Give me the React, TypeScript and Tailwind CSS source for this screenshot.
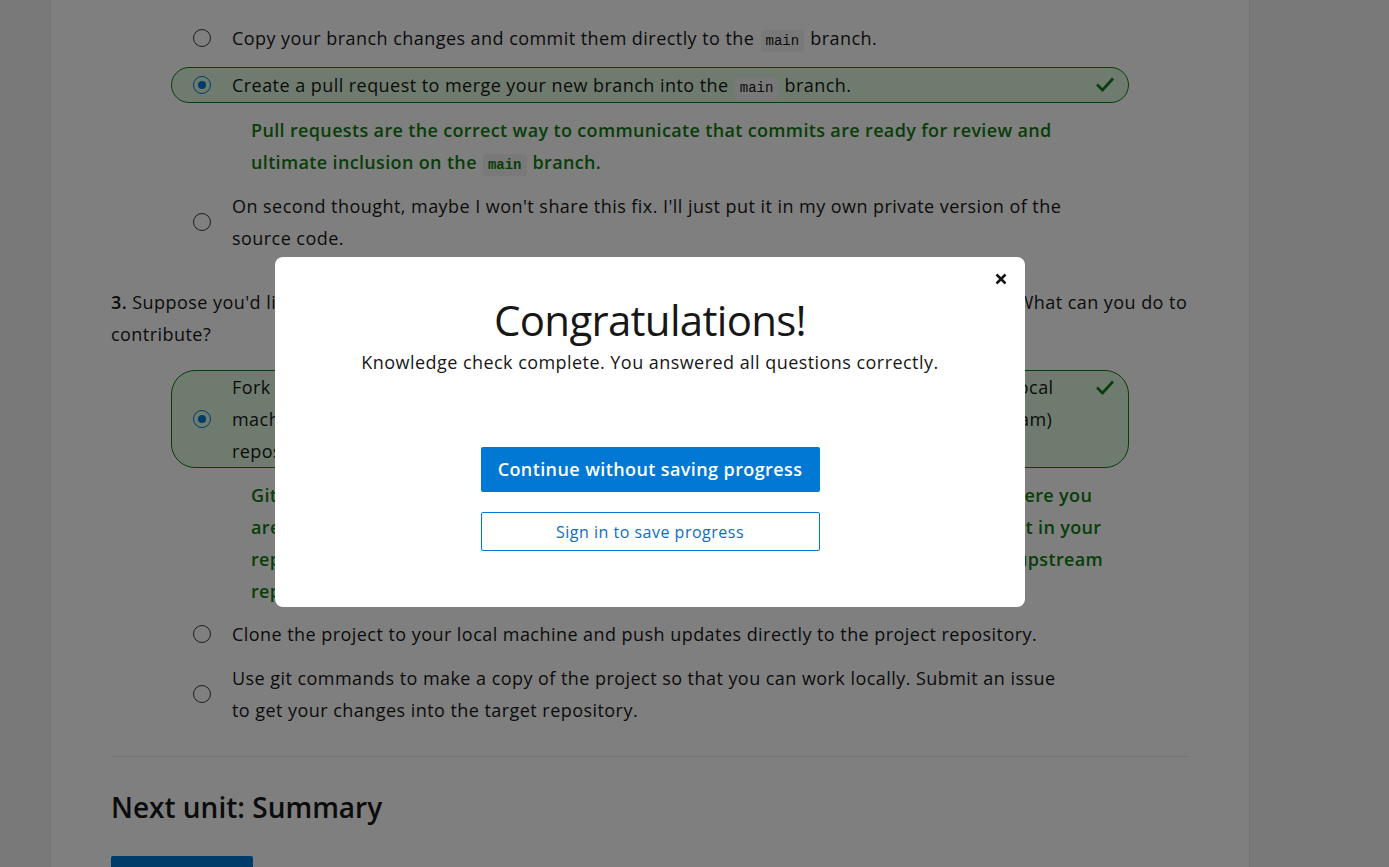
import type { ReactNode } from 'react';
import clsx from 'clsx';

const font = { fontFamily: '"Segoe UI", "Open Sans", "Noto Sans", sans-serif' };

function Code({ children }: { children: ReactNode }) {
  return (
    <code className="mx-[1px] rounded-[4px] bg-[#f2f2f2] px-[5px] py-[3px] font-['Liberation_Mono',monospace] text-[14px] leading-none tracking-normal">
      {children}
    </code>
  );
}

function Radio({ checked }: { checked?: boolean }) {
  return (
    <span
      className={clsx(
        'flex h-[18px] w-[18px] shrink-0 items-center justify-center rounded-full border-[1.5px]',
        checked ? 'border-[#0078d4]' : 'border-[#3b3b3b]'
      )}
    >
      {checked && <span className="h-[8px] w-[8px] rounded-full bg-[#0078d4]" />}
    </span>
  );
}

function Check() {
  return (
    <svg width="20" height="16" viewBox="0 0 20 16" className="mt-[8px] shrink-0">
      <path d="M2 8.5 L7.5 14 L18 2.5" fill="none" stroke="#107c10" strokeWidth="2.6" />
    </svg>
  );
}

function Option({ selected, children }: { selected?: boolean; children: ReactNode }) {
  return (
    <div
      className={clsx(
        'mx-[60px] flex min-h-[36px] items-center border pl-[21px] pr-[11px]',
        selected ? 'rounded-[24px] border-[#107c10] bg-[#dff6dd]' : 'border-transparent'
      )}
    >
      <Radio checked={selected} />
      <div className="ml-[21px] flex-1 self-center whitespace-nowrap text-[18px] leading-[32px] text-[#171717]">
        {children}
      </div>
      <div className="flex w-[22px] self-start">{selected && <Check />}</div>
    </div>
  );
}

function Explanation({ children, className }: { children: ReactNode; className?: string }) {
  return (
    <div
      className={clsx(
        'whitespace-nowrap pl-[140px] text-[18px] font-semibold leading-[32px] tracking-[0.35px] text-[#107c10]',
        className
      )}
    >
      {children}
    </div>
  );
}

function Modal() {
  return (
    <div className="fixed inset-0 flex items-center bg-black/50 pb-[3px] pl-[275px]">
      <div className="relative flex h-[350px] w-[750px] flex-col items-center rounded-[8px] bg-white pt-[37px]">
        <button className="absolute right-[16px] top-[14px] p-[2px]" aria-label="Close">
          <svg width="12" height="12" viewBox="0 0 12 12">
            <path d="M1.5 1.5 L10.5 10.5 M10.5 1.5 L1.5 10.5" stroke="#171717" strokeWidth="2.6" />
          </svg>
        </button>
        <h2 className="text-[42px] leading-[52px] tracking-[-0.7px] text-[#171717]">Congratulations!</h2>
        <p className="mt-[4px] text-[18px] leading-[24px] text-[#171717]">
          Knowledge check complete. You answered all questions correctly.
        </p>
        <button className="mt-[73px] h-[45px] w-[339px] rounded-[2px] bg-[#0078d4] text-[18px] font-semibold tracking-[0.4px] text-white">
          Continue without saving progress
        </button>
        <button className="mt-[20px] h-[39px] w-[339px] rounded-[2px] border border-[#0078d4] text-[16px] tracking-[0.5px] text-[#0f6cbd]">
          Sign in to save progress
        </button>
      </div>
    </div>
  );
}

export default function App() {
  return (
    <div style={font} className="h-[867px] overflow-hidden bg-[#f2f2f2] tracking-[0.45px]">
      <div className="ml-[50px] h-full w-[1200px] border-x border-[#e6e6e6] bg-white px-[60px] pt-[20px]">
        <div className="flex flex-col gap-[11px]">
          <Option>
            Copy your branch changes and commit them directly to the <Code>main</Code> branch.
          </Option>
          <Option selected>
            Create a pull request to merge your new branch into the <Code>main</Code> branch.
          </Option>
          <Explanation>
            Pull requests are the correct way to communicate that commits are ready for review and
            <br />
            ultimate inclusion on the <Code>main</Code> branch.
          </Explanation>
          <Option>
            On second thought, maybe I won't share this fix. I'll just put it in my own private version of the
            <br />
            source code.
          </Option>
        </div>

        <p className="mt-[31px] whitespace-nowrap text-[18px] leading-[32px] text-[#171717]">
          <span className="font-semibold">3.</span> Suppose you'd like to contribute to an open-source project on
          GitHub that you don't have access to. What can you do to
          <br />
          contribute?
        </p>

        <div className="mt-[20px] flex flex-col gap-[9px]">
          <Option selected>
            Fork the project's repository into your own GitHub account, then clone your fork to your local
            <br />
            machine, make your changes there, and then submit a pull request to the original (upstream)
            <br />
            repository.
          </Option>
          <Explanation className="mt-[2px]">
            GitHub forks are a great way to contribute to all open-source projects, particularly where you
            <br />
            are not a collaborator. First fork the repository, then make your changes to the project in your
            <br />
            repository. When you are ready, create a new pull request to the original repository (upstream
            <br />
            repository).
          </Explanation>
          <Option>Clone the project to your local machine and push updates directly to the project repository.</Option>
          <Option>
            Use git commands to make a copy of the project so that you can work locally. Submit an issue
            <br />
            to get your changes into the target repository.
          </Option>
        </div>

        <hr className="mt-[29px] border-[#e6e6e6]" />

        <h2 className="mt-[32px] text-[28px] font-semibold leading-[36px] tracking-normal text-[#171717]">
          Next unit: Summary
        </h2>

        <button className="mt-[31px] h-[40px] w-[142px] rounded-[2px] bg-[#0078d4] text-[16px] font-semibold text-white">
          Continue
        </button>
      </div>
      <Modal />
    </div>
  );
}
